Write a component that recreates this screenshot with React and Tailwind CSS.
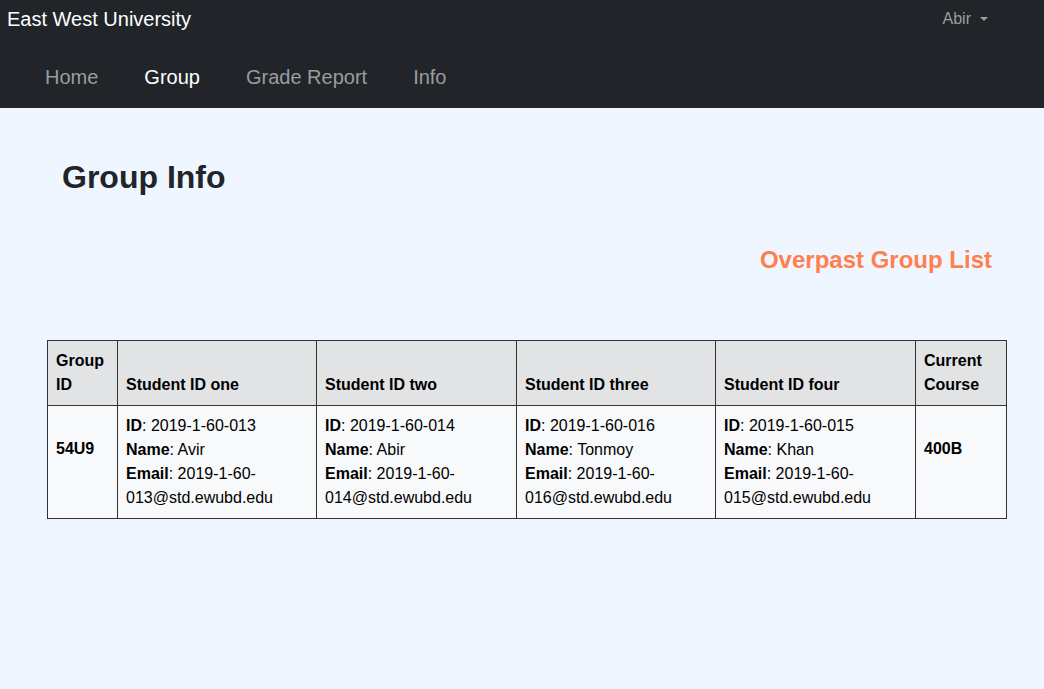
import React from 'react';

const students = [
  { id: '2019-1-60-013', name: 'Avir', mail: ['2019-1-60-', '013@std.ewubd.edu'] },
  { id: '2019-1-60-014', name: 'Abir', mail: ['2019-1-60-', '014@std.ewubd.edu'] },
  { id: '2019-1-60-016', name: 'Tonmoy', mail: ['2019-1-60-', '016@std.ewubd.edu'] },
  { id: '2019-1-60-015', name: 'Khan', mail: ['2019-1-60-', '015@std.ewubd.edu'] },
];

const headers = ['Student ID one', 'Student ID two', 'Student ID three', 'Student ID four'];
const widths = ['w-[199px]', 'w-[200px]', 'w-[199px]', 'w-[200px]'];

const App = () => {
  return (
    <div className="min-h-[689px] bg-[#f0f6ff] font-['Liberation_Sans',Arial,sans-serif] text-[#212529]">
      {/* navbar */}
      <div className="h-[108px] bg-[#212529]">
        <div className="flex h-[37px] items-center justify-between">
          <span className="pl-[7px] text-[20px] text-white">East West University</span>
          <span className="mr-[56px] flex items-center text-[16px] text-[#9a9c9e]">
            Abir
            <span className="ml-[9px] mt-[1px] h-0 w-0 border-x-[4px] border-t-[4px] border-x-transparent border-t-[#9a9c9e]"></span>
          </span>
        </div>
        <nav className="flex h-[80px] items-center pl-[22px] text-[20px]">
          <a className="px-[23px] text-[#9a9c9e]">Home</a>
          <a className="px-[23px] text-white">Group</a>
          <a className="px-[23px] text-[#9a9c9e]">Grade Report</a>
          <a className="px-[23px] text-[#9a9c9e]">Info</a>
        </nav>
      </div>

      <div className="pt-[50px]">
        <h2 className="pl-[62px] text-[32px] font-bold leading-[38px]">Group Info</h2>
        <div className="mt-[46px] flex justify-end pr-[52px]">
          <span className="text-[24px] font-bold text-[#ff7f50]">Overpast Group List</span>
        </div>

        <table className="ml-[47px] mt-[62px] border-collapse text-[16px] leading-[24px] text-black">
          <thead>
            <tr className="bg-[#e2e3e5]">
              <th className="w-[70px] border border-[#333] p-[8px] text-left align-bottom font-bold">Group ID</th>
              {headers.map((h, i) => (
                <th key={h} className={`${widths[i]} border border-[#333] p-[8px] text-left align-bottom font-bold`}>{h}</th>
              ))}
              <th className="w-[91px] border border-[#333] p-[8px] text-left align-bottom font-bold">Current Course</th>
            </tr>
          </thead>
          <tbody>
            <tr className="bg-[#f8f9fa]">
              <td className="border border-[#333] px-[8px] pt-[31px] pb-[8px] align-top font-bold">54U9</td>
              {students.map((s) => (
                <td key={s.id} className="border border-[#333] p-[8px] align-top">
                  <div><b>ID</b>: {s.id}</div>
                  <div><b>Name</b>: {s.name}</div>
                  <div><b>Email</b>: {s.mail[0]}</div>
                  <div>{s.mail[1]}</div>
                </td>
              ))}
              <td className="border border-[#333] px-[8px] pt-[31px] pb-[8px] align-top font-bold">400B</td>
            </tr>
          </tbody>
        </table>
      </div>
    </div>
  );
};

export default App;
